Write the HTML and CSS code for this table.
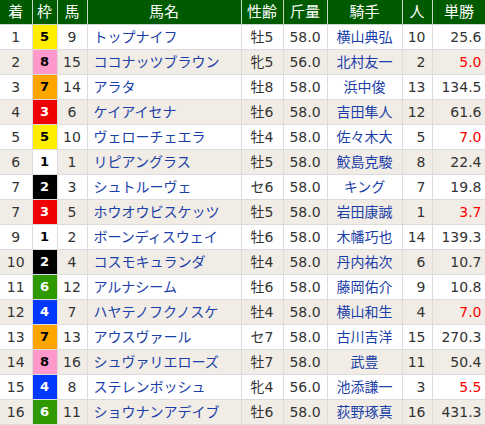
FILE: index.html
```html
<!DOCTYPE html>
<html lang="ja">
<head>
<meta charset="utf-8">
<link rel="stylesheet" href="styles.css">
</head>
<body>
<table class="result">
<colgroup>
<col class="c-rank"><col class="c-waku"><col class="c-num"><col class="c-name"><col class="c-sex"><col class="c-wt"><col class="c-jockey"><col class="c-pop"><col class="c-odds">
</colgroup>
<thead>
<tr><th>着</th><th>枠</th><th>馬</th><th>馬名</th><th>性齢</th><th>斤量</th><th>騎手</th><th>人</th><th>単勝</th></tr>
</thead>
<tbody>
<tr><td>1</td><td class="waku w5">5</td><td>9</td><td class="name">トップナイフ</td><td>牡5</td><td>58.0</td><td class="jockey">横山典弘</td><td class="pop">10</td><td class="odds">25.6</td></tr>
<tr><td>2</td><td class="waku w8">8</td><td>15</td><td class="name">ココナッツブラウン</td><td>牝5</td><td>56.0</td><td class="jockey">北村友一</td><td class="pop">2</td><td class="odds hot">5.0</td></tr>
<tr><td>3</td><td class="waku w7">7</td><td>14</td><td class="name">アラタ</td><td>牡8</td><td>58.0</td><td class="jockey">浜中俊</td><td class="pop">13</td><td class="odds">134.5</td></tr>
<tr><td>4</td><td class="waku w3">3</td><td>6</td><td class="name">ケイアイセナ</td><td>牡6</td><td>58.0</td><td class="jockey">吉田隼人</td><td class="pop">12</td><td class="odds">61.6</td></tr>
<tr><td>5</td><td class="waku w5">5</td><td>10</td><td class="name">ヴェローチェエラ</td><td>牡4</td><td>58.0</td><td class="jockey">佐々木大</td><td class="pop">5</td><td class="odds hot">7.0</td></tr>
<tr><td>6</td><td class="waku w1">1</td><td>1</td><td class="name">リピアングラス</td><td>牡5</td><td>58.0</td><td class="jockey">鮫島克駿</td><td class="pop">8</td><td class="odds">22.4</td></tr>
<tr><td>7</td><td class="waku w2">2</td><td>3</td><td class="name">シュトルーヴェ</td><td>セ6</td><td>58.0</td><td class="jockey">キング</td><td class="pop">7</td><td class="odds">19.8</td></tr>
<tr><td>7</td><td class="waku w3">3</td><td>5</td><td class="name">ホウオウビスケッツ</td><td>牡5</td><td>58.0</td><td class="jockey">岩田康誠</td><td class="pop">1</td><td class="odds hot">3.7</td></tr>
<tr><td>9</td><td class="waku w1">1</td><td>2</td><td class="name">ボーンディスウェイ</td><td>牡6</td><td>58.0</td><td class="jockey">木幡巧也</td><td class="pop">14</td><td class="odds">139.3</td></tr>
<tr><td>10</td><td class="waku w2">2</td><td>4</td><td class="name">コスモキュランダ</td><td>牡4</td><td>58.0</td><td class="jockey">丹内祐次</td><td class="pop">6</td><td class="odds">10.7</td></tr>
<tr><td>11</td><td class="waku w6">6</td><td>12</td><td class="name">アルナシーム</td><td>牡6</td><td>58.0</td><td class="jockey">藤岡佑介</td><td class="pop">9</td><td class="odds">10.8</td></tr>
<tr><td>12</td><td class="waku w4">4</td><td>7</td><td class="name">ハヤテノフクノスケ</td><td>牡4</td><td>58.0</td><td class="jockey">横山和生</td><td class="pop">4</td><td class="odds hot">7.0</td></tr>
<tr><td>13</td><td class="waku w7">7</td><td>13</td><td class="name">アウスヴァール</td><td>セ7</td><td>58.0</td><td class="jockey">古川吉洋</td><td class="pop">15</td><td class="odds">270.3</td></tr>
<tr><td>14</td><td class="waku w8">8</td><td>16</td><td class="name">シュヴァリエローズ</td><td>牡7</td><td>58.0</td><td class="jockey">武豊</td><td class="pop">11</td><td class="odds">50.4</td></tr>
<tr><td>15</td><td class="waku w4">4</td><td>8</td><td class="name">ステレンボッシュ</td><td>牝4</td><td>56.0</td><td class="jockey">池添謙一</td><td class="pop">3</td><td class="odds hot">5.5</td></tr>
<tr><td>16</td><td class="waku w6">6</td><td>11</td><td class="name">ショウナンアデイブ</td><td>牡6</td><td>58.0</td><td class="jockey">荻野琢真</td><td class="pop">16</td><td class="odds">431.3</td></tr>
</tbody>
</table>
</body>
</html>
```

FILE: styles.css
```css
html, body {
  margin: 0;
  padding: 0;
  background: #ffffff;
}

.result {
  border-collapse: collapse;
  table-layout: fixed;
  width: 486px;
  font-family: "DejaVu Sans", "Noto Sans CJK JP", sans-serif;
  font-size: 14px;
  color: #333333;
}

.c-rank { width: 32px; }
.c-waku { width: 25px; }
.c-num { width: 30px; }
.c-name { width: 154px; }
.c-sex { width: 42px; }
.c-wt { width: 44px; }
.c-jockey { width: 75px; }
.c-pop { width: 30px; }
.c-odds { width: 54px; }

.result th,
.result td {
  border: 1px solid #dcdcdc;
  height: 24px;
  padding: 0;
  text-align: center;
  white-space: nowrap;
  overflow: hidden;
  line-height: 24px;
}

.result th:first-child,
.result td:first-child {
  border-left: none;
}

.result th {
  background: #005a00;
  color: #ffffff;
  font-weight: normal;
  font-size: 15px;
  border-color: #c8d8c8;
  border-top: none;
}

.result tbody tr:nth-child(even) td {
  background: #f1ede6;
}

.result td.name {
  text-align: left;
  padding-left: 6px;
  color: #1a40a8;
}

.result td.jockey {
  color: #1a40a8;
}

.result td.pop {
  text-align: right;
  padding-right: 6px;
}

.result td.odds {
  text-align: right;
  padding-right: 4px;
}

.result td.hot {
  color: #ff0000;
}

.result td.waku {
  font-weight: bold;
  font-size: 13px;
  font-family: "DejaVu Sans", sans-serif;
}

.result tbody tr td.w1 { background: #ffffff; color: #000000; }
.result tbody tr td.w2 { background: #000000; color: #ffffff; }
.result tbody tr td.w3 { background: #f00000; color: #ffffff; }
.result tbody tr td.w4 { background: #0038ff; color: #ffffff; }
.result tbody tr td.w5 { background: #ffee00; color: #000000; }
.result tbody tr td.w6 { background: #2f9900; color: #ffffff; }
.result tbody tr td.w7 { background: #ffa500; color: #000000; }
.result tbody tr td.w8 { background: #ff99cc; color: #000000; }
```
